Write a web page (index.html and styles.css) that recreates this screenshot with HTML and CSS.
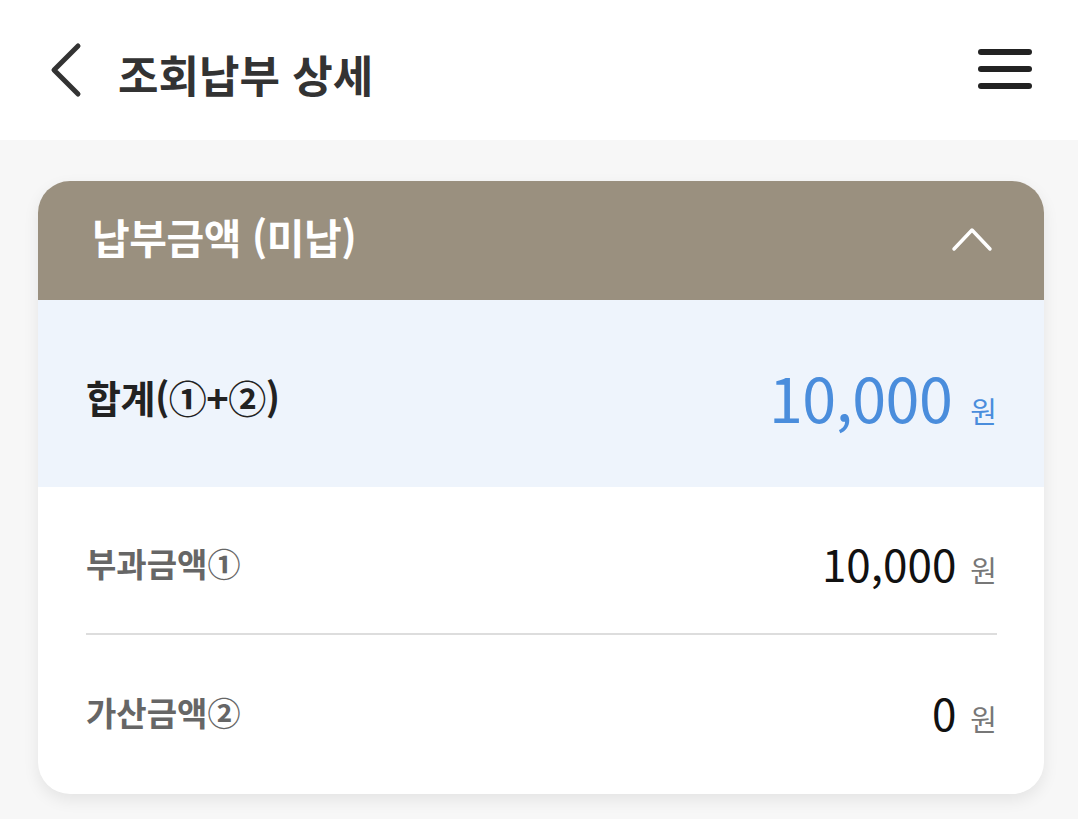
FILE: index.html
```html
<!DOCTYPE html>
<html lang="ko">
<head>
<meta charset="utf-8">
<title>조회납부 상세</title>
<link rel="stylesheet" href="styles.css">
</head>
<body>
<header class="topbar">
  <div class="topbar-left">
    <svg class="back-icon" width="40" height="60" viewBox="0 0 40 60" aria-hidden="true">
      <polyline points="32,7 8,31 32,55" fill="none" stroke="#333" stroke-width="5" stroke-linecap="round" stroke-linejoin="round"/>
    </svg>
    <h1 class="page-title">조회납부 상세</h1>
  </div>
  <svg class="menu-icon" width="56" height="44" viewBox="0 0 56 44" aria-hidden="true">
    <line x1="4" y1="5" x2="52" y2="5" stroke="#222" stroke-width="6" stroke-linecap="round"/>
    <line x1="4" y1="22" x2="52" y2="22" stroke="#222" stroke-width="6" stroke-linecap="round"/>
    <line x1="4" y1="39" x2="52" y2="39" stroke="#222" stroke-width="6" stroke-linecap="round"/>
  </svg>
</header>

<main class="content">
  <section class="card">
    <div class="card-head">
      <h2 class="card-title">납부금액 (미납)</h2>
      <svg class="fold-icon" width="44" height="30" viewBox="0 0 44 30" aria-hidden="true">
        <polyline points="4,26 22,7 40,26" fill="none" stroke="#fff" stroke-width="3.5" stroke-linecap="round" stroke-linejoin="round"/>
      </svg>
    </div>
    <div class="total-row">
      <span class="total-label">합계(①+②)</span>
      <span class="total-value"><span class="num">10,000</span><span class="unit">원</span></span>
    </div>
    <div class="rows">
      <div class="row row-first">
        <span class="row-label">부과금액①</span>
        <span class="row-value"><span class="num">10,000</span><span class="unit">원</span></span>
      </div>
      <div class="row row-last">
        <span class="row-label">가산금액②</span>
        <span class="row-value"><span class="num">0</span><span class="unit">원</span></span>
      </div>
    </div>
  </section>
</main>
</body>
</html>
```

FILE: styles.css
```css
* { box-sizing: border-box; }

html, body {
  margin: 0;
  padding: 0;
}

body {
  background: #f7f7f7;
  font-family: "Noto Sans CJK KR", "Noto Sans", sans-serif;
  color: #222;
  width: 1078px;
  height: 819px;
  overflow: hidden;
}

.topbar {
  height: 140px;
  background: #fff;
  display: flex;
  align-items: center;
  justify-content: space-between;
  padding: 0 45px 0 46px;
}

.topbar-left {
  display: flex;
  align-items: center;
  gap: 32px;
}

.back-icon { display: block; margin-top: -2px; }

.page-title {
  margin: 0;
  font-size: 44px;
  font-weight: 700;
  color: #333;
  letter-spacing: 0;
  line-height: 1;
  padding-top: 8px;
}

.menu-icon { display: block; margin-top: -2px; }

.content {
  padding: 41px 34px 0 38px;
}

.card {
  background: #fff;
  border-radius: 32px;
  overflow: hidden;
  box-shadow: 0 6px 16px rgba(0, 0, 0, 0.08);
}

.card-head {
  height: 119px;
  background: #9a907f;
  display: flex;
  align-items: center;
  justify-content: space-between;
  padding: 0 50px 0 54px;
}

.card-title {
  margin: 0 0 8px;
  font-size: 41px;
  font-weight: 700;
  color: #fff;
  line-height: 1;
  letter-spacing: -0.5px;
}

.fold-icon { display: block; margin-top: -6px; }

.total-row {
  height: 187px;
  background: #eef4fc;
  display: flex;
  align-items: center;
  justify-content: space-between;
  padding: 6px 47px 0 48px;
}

.total-label {
  font-size: 38px;
  font-weight: 700;
  color: #222;
  letter-spacing: -0.5px;
}

.total-value {
  display: flex;
  align-items: baseline;
  color: #4a8ddc;
}

.total-value .num {
  font-size: 61px;
  font-weight: 400;
  letter-spacing: -0.5px;
}

.total-value .unit {
  font-size: 29px;
  margin-left: 18px;
}

.rows {
  padding: 0 47px 0 48px;
}

.row {
  display: flex;
  align-items: center;
  justify-content: space-between;
}

.row-first {
  height: 148px;
  padding-top: 6px;
  border-bottom: 2px solid #dddddd;
}

.row-last {
  height: 159px;
  padding-bottom: 6px;
}

.row-label {
  font-size: 33px;
  font-weight: 700;
  color: #666;
  letter-spacing: 0;
}

.row-value {
  display: flex;
  align-items: baseline;
  color: #111;
}

.row-value .num {
  font-size: 44px;
  font-weight: 400;
}

.row-value .unit {
  font-size: 29px;
  color: #777;
  margin-left: 14px;
}
```
